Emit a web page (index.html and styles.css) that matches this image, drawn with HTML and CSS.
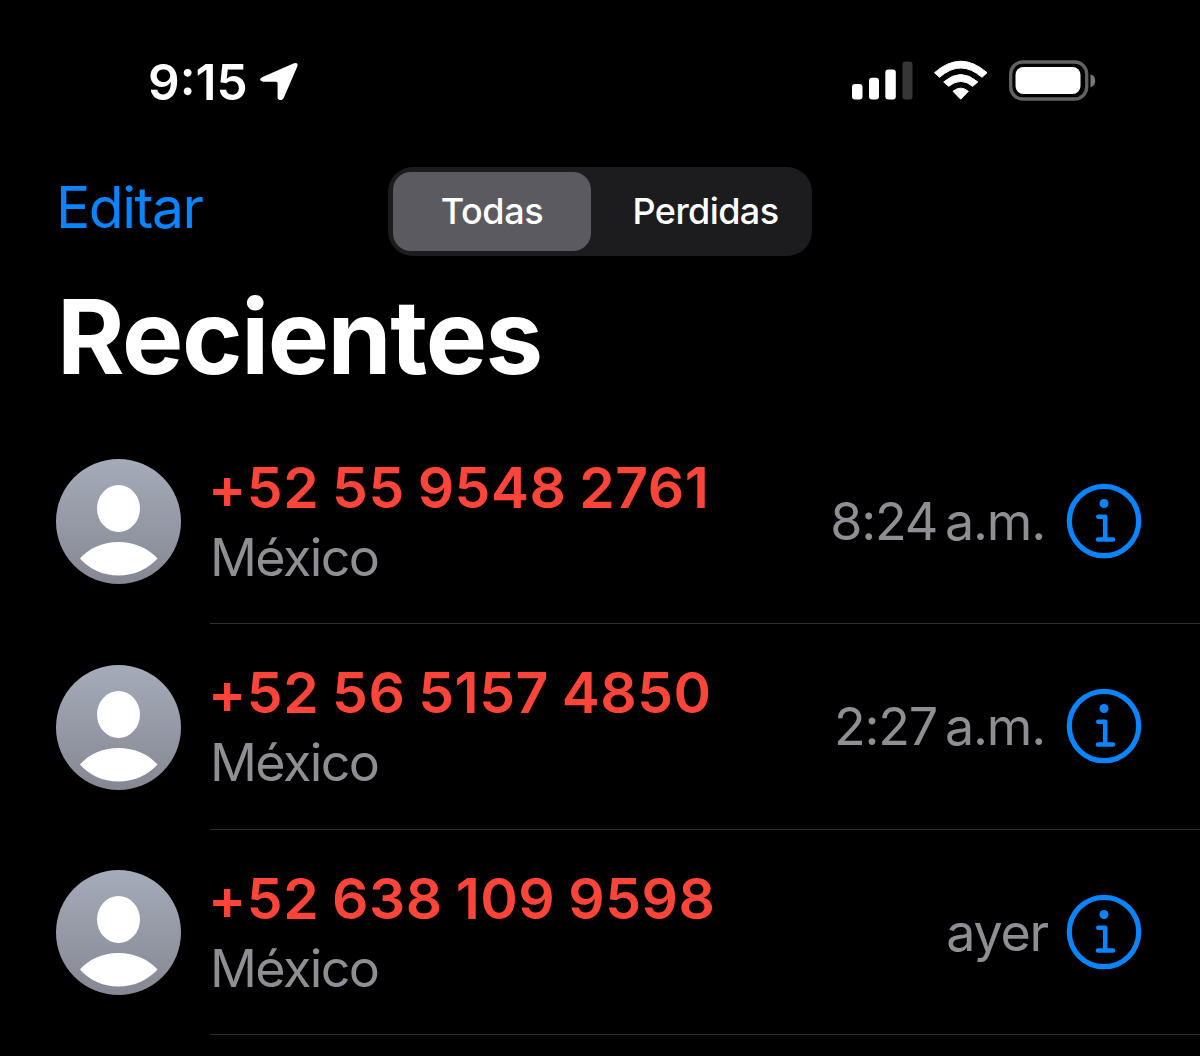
FILE: index.html
```html
<!DOCTYPE html>
<html lang="es">
<head>
<meta charset="utf-8">
<meta name="viewport" content="width=device-width, initial-scale=1">
<title>Recientes</title>
<link rel="stylesheet" href="styles.css">
</head>
<body>
<!-- shapes shared by the rows -->
<svg class="defs" width="0" height="0">
  <defs>
    <linearGradient id="avatarFill" x1="0" y1="0" x2="0" y2="1">
      <stop offset="0" stop-color="#a5abb9"/>
      <stop offset="1" stop-color="#858892"/>
    </linearGradient>
    <symbol id="person" viewBox="0 0 125 125">
      <circle cx="62.5" cy="62.5" r="62.5" fill="url(#avatarFill)"/>
      <ellipse cx="62.5" cy="49.5" rx="21.5" ry="23.5" fill="#fff"/>
      <path d="M24 99.500C32 90 46 83 62.500 83S93 90 101.500 99.500C92 110 78 116.500 62.500 116.500S33 110 24 99.500Z" fill="#fff"/>
    </symbol>
    <symbol id="info" viewBox="0 0 76 76">
      <circle cx="38" cy="38" r="34.700" fill="none" stroke="#0a84ff" stroke-width="5.200"/>
      <circle cx="38" cy="20.500" r="4.500" fill="#0a84ff"/>
      <path d="M32.300 33.800H39.200V56M32 56.500H47" fill="none" stroke="#0a84ff" stroke-width="4.600" stroke-linecap="round" stroke-linejoin="round"/>
    </symbol>
  </defs>
</svg>

<div class="statusbar">
  <div class="clock">
    <span class="time">9:15</span>
    <svg class="location" width="40" height="40" viewBox="0 0 40 40">
      <path d="M2.500 17L34 3.200Q38.800 2 37.300 6.600L23.600 38.200Q20.500 42.500 17.600 38.200V23.300Q17.600 21.800 16.200 21.800H3Q-2.500 20 2.500 17Z" fill="#fff"/>
    </svg>
  </div>
  <div class="indicators">
    <svg width="61" height="40" viewBox="0 0 61 40">
      <rect x="0" y="24" width="10.500" height="15.500" rx="3" fill="#fff"/>
      <rect x="17" y="17.700" width="10" height="21.800" rx="3" fill="#fff"/>
      <rect x="33.300" y="9.500" width="10.500" height="30" rx="3" fill="#fff"/>
      <rect x="50.500" y="1.500" width="10" height="38" rx="3" fill="#363636"/>
    </svg>
    <svg class="wifi" width="54" height="41" viewBox="0 0 54 41">
      <path d="M0.500 12.700Q26.800 -10.300 53 12.700L48 17.300Q26.800 -1.300 5.500 17.300Z" fill="#fff" stroke="#fff" stroke-width="1" stroke-linejoin="round"/>
      <path d="M9.700 22Q26.800 7 43.800 22L38.700 26.300Q26.800 16.500 14.700 26.300Z" fill="#fff" stroke="#fff" stroke-width="1" stroke-linejoin="round"/>
      <path d="M19 31.300Q26.800 25 34.300 31.300L26.700 39.200Z" fill="#fff" stroke="#fff" stroke-width="1" stroke-linejoin="round"/>
    </svg>
    <svg class="battery" width="88" height="42" viewBox="0 0 88 42">
      <rect x="1.700" y="2" width="76" height="37" rx="12" fill="none" stroke="#626262" stroke-width="3.300"/>
      <rect x="6.500" y="7" width="65" height="27" rx="8" fill="#fff"/>
      <path d="M81.500 14.200Q86.200 15.500 86.200 20.700T81.500 27.200Z" fill="#7a7a7a"/>
    </svg>
  </div>
</div>

<div class="navbar">
  <a class="edit" href="#">Editar</a>
  <div class="segmented">
    <span class="segment active">Todas</span>
    <span class="segment">Perdidas</span>
  </div>
</div>

<h1>Recientes</h1>

<div class="calls">
  <div class="call">
    <svg class="avatar"><use href="#person"/></svg>
    <div class="details">
      <div class="who">
        <div class="number">+52 55 9548 2761</div>
        <div class="place">México</div>
      </div>
      <div class="when">8:24<span class="thin"></span>a.m.</div>
      <svg class="info"><use href="#info"/></svg>
    </div>
  </div>
  <div class="call">
    <svg class="avatar"><use href="#person"/></svg>
    <div class="details">
      <div class="who">
        <div class="number">+52 56 5157 4850</div>
        <div class="place">México</div>
      </div>
      <div class="when">2:27<span class="thin"></span>a.m.</div>
      <svg class="info"><use href="#info"/></svg>
    </div>
  </div>
  <div class="call">
    <svg class="avatar"><use href="#person"/></svg>
    <div class="details">
      <div class="who">
        <div class="number">+52 638 109 9598</div>
        <div class="place">México</div>
      </div>
      <div class="when day">ayer</div>
      <svg class="info"><use href="#info"/></svg>
    </div>
  </div>
</div>
</body>
</html>
```
FILE: styles.css
```css
body {
  margin: 0;
  height: 1056px;
  overflow: hidden;
  background-color: #000;
  color: #fff;
  font-family: Inter, "Liberation Sans", sans-serif;
}

.defs {
  display: block;
}

/* status bar */
.statusbar {
  display: flex;
  justify-content: space-between;
  height: 107px;
  padding: 60px 103.5px 0 148px;
  box-sizing: border-box;
}

.clock,
.indicators {
  display: flex;
  height: 42px;
}

.time {
  font-size: 49.5px;
  font-weight: 600;
  line-height: 45px;
}

.location {
  margin-left: 12px;
}

.wifi {
  margin-left: 21px;
}

.battery {
  margin-left: 20.5px;
}

/* edit link and filter */
.navbar {
  display: grid;
  grid-template-columns: 332px 424px;
  margin-top: 60px;
  padding-left: 56px;
  height: 89px;
}

.edit {
  color: #0a84ff;
  font-size: 57px;
  line-height: 82px;
  letter-spacing: -1.5px;
  text-decoration: none;
}

.segmented {
  display: flex;
  padding: 5px;
  border-radius: 25px;
  background-color: #1c1c1f;
}

.segment {
  flex: none;
  width: 198px;
  border-radius: 18px;
  box-sizing: border-box;
  font-size: 36px;
  font-weight: 500;
  line-height: 79px;
  height: 79px;
  letter-spacing: -0.4px;
  text-align: center;
}

.segment + .segment {
  width: 216px;
  padding-left: 13px;
  letter-spacing: -0.6px;
}

.active {
  background-color: #5b5a60;
}

h1 {
  margin: 0;
  padding: 17px 0 17.5px 57px;
  height: 128px;
  font-size: 103px;
  font-weight: 700;
  line-height: 128px;
  letter-spacing: -1.4px;
}

/* call list */
.call {
  display: flex;
  height: 205.5px;
  padding-left: 56px;
}

.avatar {
  width: 125px;
  height: 125px;
  margin: 40.5px 29px 0 0;
}

.details {
  display: flex;
  flex: 1;
  align-items: center;
  padding-right: 58px;
  border-bottom: 1px solid #2f2f31;
}

.who {
  flex: 1;
  padding-top: 4px;
}

.number {
  margin-left: -2px;
  color: #ff453a;
  font-size: 57px;
  font-weight: 600;
  line-height: 70px;
  letter-spacing: 0.5px;
  word-spacing: -2px;
  white-space: nowrap;
}

.place,
.when {
  color: #8e8e93;
  font-size: 52px;
  line-height: 70px;
  letter-spacing: -1.6px;
  white-space: nowrap;
}

.when {
  padding-top: 2px;
  letter-spacing: -1.2px;
}

.thin {
  display: inline-block;
  width: 8px;
}

.info {
  width: 76px;
  height: 76px;
  margin-left: 21px;
}

.day + .info {
  margin-left: 18px;
}
```
